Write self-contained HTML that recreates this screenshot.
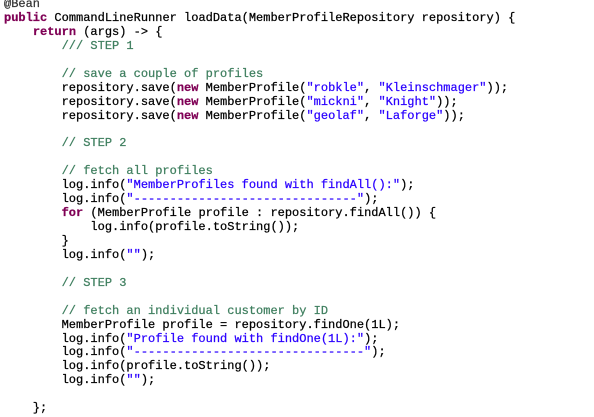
<!DOCTYPE html>
<html><head><style>
html,body{margin:0;padding:0;background:#fff;width:594px;height:417px;overflow:hidden}
pre{margin:0;position:absolute;left:4px;top:-2px;font-family:"Liberation Mono",monospace;font-size:12px;line-height:13.93px;color:#000;-webkit-text-stroke:0.25px currentColor}
.k{color:#7f0055;font-weight:bold}
.c{color:#3f7f5f}
.s{color:#2a00ff}
.a{color:#333}
</style></head><body>
<pre><span class="a">@Bean</span>
<span class="k">public</span> CommandLineRunner loadData(MemberProfileRepository repository) {
    <span class="k">return</span> (args) -&gt; {
        <span class="c">/// STEP 1</span>

        <span class="c">// save a couple of profiles</span>
        repository.save(<span class="k">new</span> MemberProfile(<span class="s">"robkle"</span>, <span class="s">"Kleinschmager"</span>));
        repository.save(<span class="k">new</span> MemberProfile(<span class="s">"mickni"</span>, <span class="s">"Knight"</span>));
        repository.save(<span class="k">new</span> MemberProfile(<span class="s">"geolaf"</span>, <span class="s">"Laforge"</span>));

        <span class="c">// STEP 2</span>

        <span class="c">// fetch all profiles</span>
        log.info(<span class="s">"MemberProfiles found with findAll():"</span>);
        log.info(<span class="s">"-------------------------------"</span>);
        <span class="k">for</span> (MemberProfile profile : repository.findAll()) {
            log.info(profile.toString());
        }
        log.info(<span class="s">""</span>);

        <span class="c">// STEP 3</span>

        <span class="c">// fetch an individual customer by ID</span>
        MemberProfile profile = repository.findOne(1L);
        log.info(<span class="s">"Profile found with findOne(1L):"</span>);
        log.info(<span class="s">"--------------------------------"</span>);
        log.info(profile.toString());
        log.info(<span class="s">""</span>);

    };</pre>
</body></html>
